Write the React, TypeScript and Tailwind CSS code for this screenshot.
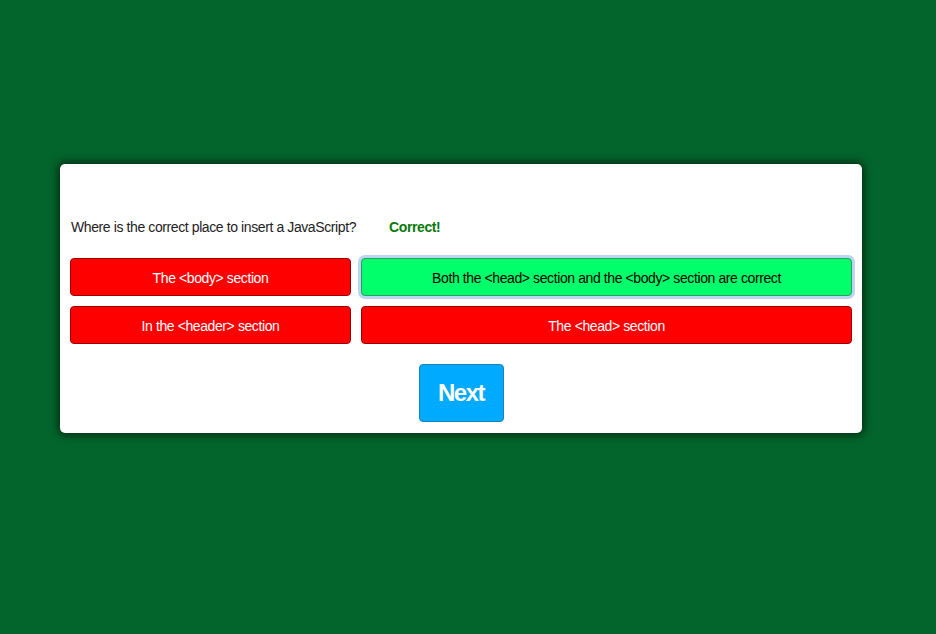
const ANSWERS = [
    { text: "The <body> section", state: "wrong" },
    { text: "Both the <head> section and the <body> section are correct", state: "right" },
    { text: "In the <header> section", state: "wrong" },
    { text: "The <head> section", state: "wrong" },
];

export default function App() {
    return (
        <div className="min-h-[634px] w-full bg-[#03652b] pt-[164px] pl-[60px] font-['Liberation_Sans',Arial,sans-serif]">
            <div className="w-[802px] h-[269px] bg-white rounded-[5px] shadow-[0_0_8px_2px_rgba(0,0,0,0.6)] px-[10px] pt-[54px]">
                <div className="flex items-center h-[18px] text-[14px] tracking-[-0.4px] text-[#222]">
                    <span className="pl-px">Where is the correct place to insert a JavaScript?</span>
                    <span className="ml-[33px] font-bold text-[#0a7a0a]">Correct!</span>
                </div>
                <div className="grid grid-cols-[281px_491px] gap-[10px] mt-[22px]">
                    {ANSWERS.map((a) => (
                        <button
                            key={a.text}
                            className={
                                a.state === "right"
                                    ? "h-[38px] pt-[2px] rounded-[4px] border border-[#2e9e5a] bg-[#00ff6a] text-black text-[14px] tracking-[-0.4px] ring-[3px] ring-[#bcd5f5]"
                                    : "h-[38px] pt-[2px] rounded-[4px] border border-[#a00000] bg-[#ff0000] text-white text-[14px] tracking-[-0.4px]"
                            }
                        >
                            {a.text}
                        </button>
                    ))}
                </div>
                <div className="flex justify-center mt-[20px]">
                    <button className="w-[85px] h-[58px] rounded-[4px] border border-[#1a7fbf] bg-[#00aaff] text-white text-[24px] font-bold tracking-[-1.5px]">
                        Next
                    </button>
                </div>
            </div>
        </div>
    );
}
